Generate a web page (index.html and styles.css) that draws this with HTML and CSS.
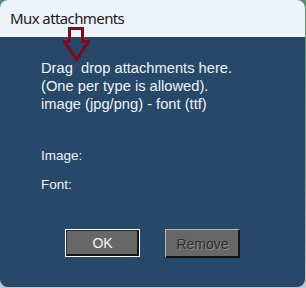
FILE: index.html
```html
<!DOCTYPE html>
<html lang="en">
<head>
  <meta charset="UTF-8">
  <title>Mux attachments</title>
  <link rel="stylesheet" href="styles.css">
</head>
<body>
  <div class="window">
    <div class="titlebar">Mux attachments</div>

    <!-- drop hint arrow, sits over the title bar edge -->
    <svg class="drop-arrow" width="27" height="35" viewBox="0 0 27 35">
      <path d="M6.5 1.5 H19.5 V14.5 H25.5 L13.5 32.5 L1.5 14.5 H6.5 Z"
            fill="none" stroke="#7d0a1f" stroke-width="3" stroke-linejoin="miter"/>
    </svg>

    <div class="content">
      <div class="message">
        <div>Drag &nbsp;drop attachments here.</div>
        <div>(One per type is allowed).</div>
        <div>image (jpg/png) - font (ttf)</div>
      </div>

      <div class="fields">
        <div class="field">Image:</div>
        <div class="field">Font:</div>
      </div>

      <div class="buttons">
        <button class="btn btn-default">OK</button>
        <button class="btn" disabled>Remove</button>
      </div>
    </div>
  </div>
</body>
</html>
```

FILE: styles.css
```css
html, body {
  margin: 0;
  padding: 0;
}

body {
  width: 306px;
  height: 288px;
  background: linear-gradient(#5c8b70, #8aa096 60%, #c3c8cc);
  overflow: hidden;
}

.window {
  position: relative;
  width: 305px;
  height: 287px;
  display: flex;
  flex-direction: column;
  border-radius: 8px;
  overflow: hidden;
  background: #274868;
}

.titlebar {
  height: 37px;
  box-sizing: border-box;
  padding: 8px 0 0 10px;
  background: #eef2f9;
  color: #1b1b1b;
  font-family: "Noto Sans", sans-serif;
  font-size: 15px;
  letter-spacing: -0.6px;
}

.drop-arrow {
  position: absolute;
  left: 63px;
  top: 27px;
}

.content {
  flex: 1;
  padding: 22px 0 0 41px;
  color: #eef3f8;
  font-family: "Liberation Sans", Arial, sans-serif;
}

.message {
  font-size: 14.7px;
  line-height: 18px;
}

.fields {
  margin-top: 35px;
  font-size: 13.5px;
  line-height: 16px;
}

.field {
  margin-bottom: 13px;
}

.buttons {
  display: flex;
  gap: 25px;
  margin: 36px 0 0 24px;
}

.btn {
  width: 75px;
  height: 29px;
  box-sizing: border-box;
  padding: 0;
  background: #676767;
  color: #f4f4f4;
  font-family: "Liberation Sans", Arial, sans-serif;
  font-size: 14px;
  border: 1px solid;
  border-color: #b4b4b4 #141414 #141414 #b4b4b4;
  box-shadow: inset -1px -1px 0 #141414;
}

.btn-default {
  height: 28px;
  border-color: #ffffff;
  box-shadow: inset 1px 1px 0 #2a2a2a, inset -2px -2px 0 #141414;
}

.btn:disabled {
  color: #26313a;
  text-shadow: 1px 1px 0 #8e8e8e;
}
```
